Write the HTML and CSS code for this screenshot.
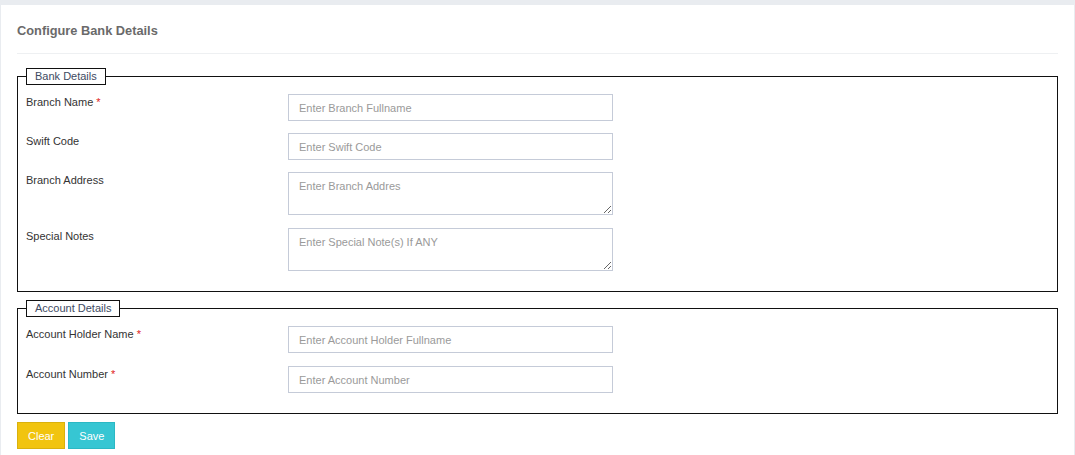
FILE: index.html
```html
<!DOCTYPE html>
<html lang="en">
<head>
<meta charset="utf-8">
<title>Configure Bank Details</title>
<link rel="stylesheet" href="styles.css">
</head>
<body>
<div class="card">
  <div class="card-header">Configure Bank Details</div>
  <form class="form">
    <fieldset class="group">
      <legend class="group-title">Bank Details</legend>
      <div class="row">
        <label class="label">Branch Name <span class="req">*</span></label>
        <input class="control" type="text" placeholder="Enter Branch Fullname">
      </div>
      <div class="row">
        <label class="label">Swift Code</label>
        <input class="control" type="text" placeholder="Enter Swift Code">
      </div>
      <div class="row row-tall">
        <label class="label">Branch Address</label>
        <textarea class="control area" placeholder="Enter Branch Addres"></textarea>
      </div>
      <div class="row">
        <label class="label">Special Notes</label>
        <textarea class="control area" placeholder="Enter Special Note(s) If ANY"></textarea>
      </div>
    </fieldset>
    <fieldset class="group second">
      <legend class="group-title">Account Details</legend>
      <div class="row row-tall">
        <label class="label">Account Holder Name <span class="req">*</span></label>
        <input class="control" type="text" placeholder="Enter Account Holder Fullname">
      </div>
      <div class="row">
        <label class="label">Account Number <span class="req">*</span></label>
        <input class="control" type="text" placeholder="Enter Account Number">
      </div>
    </fieldset>
    <div class="actions">
      <button type="button" class="btn btn-clear">Clear</button>
      <button type="button" class="btn btn-save">Save</button>
    </div>
  </form>
</div>
</body>
</html>
```
FILE: styles.css
```css
html, body {
  margin: 0;
  padding: 0;
}
body {
  background: #e9ecf0;
  font-family: "Liberation Sans", Arial, sans-serif;
  font-size: 11px;
  color: #333;
  height: 455px;
  overflow: hidden;
}
.card {
  margin: 5px 1px 0 1px;
  background: #fff;
  padding: 0 16px 40px 16px;
  min-height: 460px;
}
.card-header {
  font-size: 12.8px;
  font-weight: bold;
  color: #6a6a6a;
  line-height: 16px;
  padding: 18px 0 14px 0;
  border-bottom: 1px solid #eef0f2;
}
.form {
  margin: 0;
}
.group {
  margin: 14px 0 0 0;
  border: 1px solid #111;
  padding: 9px 8px 8px 8px;
  min-width: 0;
}
.group.second {
  margin-top: 8px;
}
.group-title {
  border: 1px solid #111;
  padding: 0 8px;
  line-height: 15px;
  font-size: 11px;
  color: #3d4a62;
}
.row {
  display: grid;
  grid-template-columns: 262px 325px;
  align-items: start;
  margin-bottom: 12px;
}
.row.row-tall {
  margin-bottom: 13px;
}
.label {
  line-height: 15px;
  padding-top: 1px;
  color: #333;
}
.req {
  color: #e02222;
}
.control {
  box-sizing: border-box;
  width: 325px;
  height: 27px;
  border: 1px solid #c5cbd8;
  border-radius: 0;
  padding: 0 10px;
  font-family: "Liberation Sans", Arial, sans-serif;
  font-size: 11px;
  color: #333;
  background: #fff;
  margin: 0;
  outline: none;
}
.area {
  height: 43px;
  padding: 6px 10px;
  line-height: 15px;
  resize: vertical;
  display: block;
}
.control::placeholder {
  color: #9a9a9a;
}
.actions {
  display: flex;
  gap: 3px;
  margin-top: 8px;
}
.btn {
  height: 27px;
  padding: 0 10px;
  border: 1px solid;
  border-radius: 0;
  color: #fff;
  font-family: "Liberation Sans", Arial, sans-serif;
  font-size: 11px;
  cursor: pointer;
}
.btn-clear {
  background: #f1c40f;
  border-color: #dab10d;
}
.btn-save {
  background: #36c6d3;
  border-color: #2bb8c4;
}
```
